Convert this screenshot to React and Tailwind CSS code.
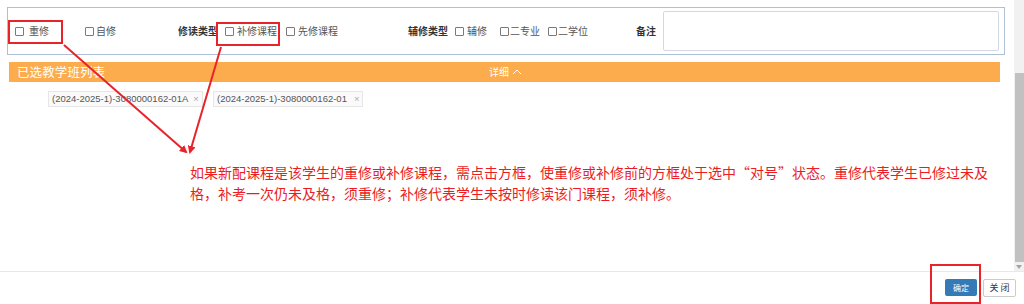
import React from "react";

const cjk = { fontFamily: '"Microsoft YaHei","Noto Sans CJK SC","Noto Sans",sans-serif' };

function Cb({ ml }) {
  return <span className={`inline-block w-[9px] h-[9px] border border-[#7a7a7a] rounded-[1px] bg-white shrink-0 ${ml}`} />;
}

export default function App() {
  return (
    <div className="relative w-[1024px] h-[304px] bg-white overflow-hidden" style={cjk}>
      <div className="flex h-[271px]">
        <div className="flex-1 flex flex-col">
          {/* form box */}
          <div className="mt-[7px] ml-[7px] w-[998px] h-[48px] border border-[#aebfd8] flex items-center text-[10px] leading-[12px] text-[#555]">
            <Cb ml="ml-[7px]" />
            <span className="ml-[5px] w-[20px]">重修</span>
            <Cb ml="ml-[36px]" />
            <span className="ml-[2px] w-[20px]">自修</span>
            <span className="ml-[62px] w-[40px] font-bold text-[#333]">修读类型</span>
            <Cb ml="ml-[7px]" />
            <span className="ml-[3px] w-[40px]">补修课程</span>
            <Cb ml="ml-[9px]" />
            <span className="ml-[3px] w-[40px]">先修课程</span>
            <span className="ml-[70px] w-[40px] font-bold text-[#333]">辅修类型</span>
            <Cb ml="ml-[7px]" />
            <span className="ml-[3px] w-[20px]">辅修</span>
            <Cb ml="ml-[13px]" />
            <span className="ml-[1px] w-[30px]">二专业</span>
            <Cb ml="ml-[8px]" />
            <span className="ml-[1px] w-[30px]">二学位</span>
            <span className="ml-[48px] w-[20px] font-bold text-[#333]">备注</span>
            <div className="ml-[7px] w-[336px] h-[40px] border border-[#d3d9e3] rounded-[2px] bg-white" />
          </div>

          {/* orange bar */}
          <div className="mt-[7px] ml-[9px] w-[991px] h-[20px] bg-[#fcab4d] flex items-center text-white">
            <span className="ml-[8px] w-[472px] text-[12.5px] leading-[20px] tracking-[0.1px]">已选教学班列表</span>
            <span className="text-[10px] leading-[20px] flex items-center gap-[2px]">
              详细
              <svg width="10" height="8" viewBox="0 0 10 8" className="ml-[1px]">
                <path d="M1 6 L5 2 L9 6" fill="none" stroke="white" strokeWidth="1" />
              </svg>
            </span>
          </div>

          {/* tags */}
          <div className="mt-[9px] ml-[48px] flex gap-[10px] text-[9.5px] leading-[14px] text-[#555]" style={{ fontFamily: '"Liberation Sans",Arial,sans-serif' }}>
            <div className="w-[155px] h-[16px] border border-[#e6e6e6] bg-[#fafafa] flex items-center pl-[3px]">
              <span>(2024-2025-1)-3080000162-01A</span>
              <span className="ml-[5px] text-[#aaa]">×</span>
            </div>
            <div className="w-[150px] h-[16px] border border-[#e6e6e6] bg-[#fafafa] flex items-center pl-[3px]">
              <span>(2024-2025-1)-3080000162-01</span>
              <span className="ml-[7px] text-[#aaa]">×</span>
            </div>
          </div>

          {/* annotation text */}
          <div className="mt-[55px] ml-[190px] text-[14px] leading-[21px] text-[#ec1c24] whitespace-nowrap">
            如果新配课程是该学生的重修或补修课程，需点击方框，使重修或补修前的方框处于选中“对号”状态。重修代表学生已修过未及
            <br />
            格，补考一次仍未及格，须重修；补修代表学生未按时修读该门课程，须补修。
          </div>
        </div>

        {/* scrollbar */}
        <div className="w-[10px] h-full bg-[#f1f1f1] flex flex-col items-center">
          <div className="mt-[73px] w-[9px] h-[189px] bg-[#c1c1c1]" />
          <svg width="6" height="4" viewBox="0 0 6 4" className="mt-[3px]">
            <path d="M0 0 L6 0 L3 4 Z" fill="#a3a3a3" />
          </svg>
        </div>
      </div>

      {/* footer */}
      <div className="h-[33px] border-t border-[#e8e8e8] flex items-start justify-end pr-[8px] pt-[7px] gap-[6px]">
        <div className="w-[32px] h-[17px] bg-[#337ab7] rounded-[2px] flex items-center justify-center text-white text-[8px]">确定</div>
        <div className="w-[33px] h-[18px] border border-[#ccc] rounded-[2px] bg-white flex items-center justify-center text-[#333] text-[9px]">关 闭</div>
      </div>

      {/* red annotation boxes and arrows */}
      <div className="absolute left-[8px] top-[20px] w-[55px] h-[24px] border-2 border-[#e8232a] pointer-events-none" />
      <div className="absolute left-[216px] top-[22px] w-[64px] h-[24px] border-2 border-[#e8232a] pointer-events-none" />
      <div className="absolute left-[930px] top-[264px] w-[51px] h-[40px] border-2 border-[#e8232a] pointer-events-none" />
      <svg className="absolute left-0 top-0 pointer-events-none" width="1024" height="304">
        <defs>
          <marker id="ah" markerWidth="8" markerHeight="8" refX="6" refY="4" orient="auto" markerUnits="userSpaceOnUse">
            <path d="M0 0 L8 4 L0 8 Z" fill="#e8232a" />
          </marker>
        </defs>
        <line x1="64" y1="45" x2="186" y2="152" stroke="#e8232a" strokeWidth="2" markerEnd="url(#ah)" />
        <line x1="221" y1="47" x2="190" y2="152" stroke="#e8232a" strokeWidth="2" markerEnd="url(#ah)" />
      </svg>
    </div>
  );
}
